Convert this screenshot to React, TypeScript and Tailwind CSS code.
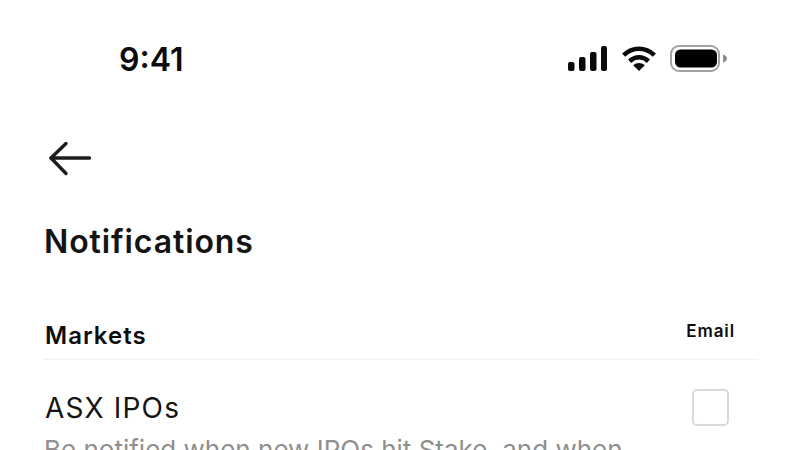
import React from 'react';

const StatusBar: React.FC = () => (
  <div className="flex h-[118px] items-start justify-between pl-[119px] pr-[73px] pt-[38px]">
    <span className="text-[32px] leading-[44px] font-semibold text-[#0b0b0b]">9:41</span>
    <div className="flex items-center gap-[14px] pt-[7px]">
      <svg className="mr-px" width="39" height="25" viewBox="0 0 39 25" fill="#0a0a0a">
        <rect x="0" y="16" width="6.5" height="9" rx="2" />
        <rect x="11" y="11" width="6.5" height="14" rx="2" />
        <rect x="22" y="6" width="6.5" height="19" rx="2" />
        <rect x="33" y="0" width="6" height="25" rx="2" />
      </svg>
      <svg width="34" height="25" viewBox="0 0 34 25" fill="none" stroke="#0a0a0a" strokeWidth="4.6">
        <path d="M1.6 9.2C10.5 0.6 23.5 0.6 32.4 9.2" />
        <path d="M7.6 15.2C13.2 10 20.8 10 26.4 15.2" />
        <path d="M17 25L11.2 19.2C14.6 16.4 19.4 16.4 22.8 19.2Z" fill="#0a0a0a" stroke="none" />
      </svg>
      <svg width="57" height="27" viewBox="0 0 57 27" fill="none">
        <rect x="1" y="1" width="48" height="25" rx="8" stroke="#a3a3a3" strokeWidth="2" />
        <rect x="5" y="4.5" width="42" height="18" rx="5.5" fill="#000" />
        <path d="M53 9.5C55.5 10.2 57 11.6 57 13.5C57 15.4 55.5 16.8 53 17.5Z" fill="#8a8a8a" />
      </svg>
    </div>
  </div>
);

export default function App() {
  return (
    <div className="h-[450px] w-[800px] overflow-hidden bg-white font-['Inter',sans-serif]">
      <StatusBar />
      <div className="pl-[44px] pr-[42px]">
        <svg className="ml-[4px] mt-[22px]" width="44" height="36" viewBox="0 0 44 36" fill="none" stroke="#1c1c1c" strokeWidth="3.4" strokeLinecap="round" strokeLinejoin="round">
          <path d="M41.5 18H3" />
          <path d="M18 3.5L3 18L18 33.5" />
        </svg>
        <h1 className="mt-[44px] text-[32px] leading-[44px] font-semibold tracking-[0.9px] text-[#141414]">Notifications</h1>
        <div className="mt-[55px] flex items-start justify-between border-b border-[#f0f0f0] pb-[6px] pl-px pr-[23px]">
          <span className="text-[24px] leading-[34px] font-semibold tracking-[1px] text-[#0d0d0d]">Markets</span>
          <span className="text-[17px] leading-[24px] font-semibold tracking-[0.9px] text-[#0d0d0d]">Email</span>
        </div>
        <div className="mt-[28px] flex items-start justify-between pr-[29px]">
          <div>
            <div className="ml-px text-[28px] leading-[40px] tracking-[1.2px] text-[#141414]">ASX IPOs</div>
            <p className="mt-[4px] text-[26px] leading-[36px] whitespace-nowrap text-[#8f8f8f]">Be notified when new IPOs hit Stake, and when</p>
          </div>
          <div className="mt-px h-[37px] w-[37px] rounded-[5px] border-2 border-[#d9d9d9] bg-white" />
        </div>
      </div>
    </div>
  );
}
